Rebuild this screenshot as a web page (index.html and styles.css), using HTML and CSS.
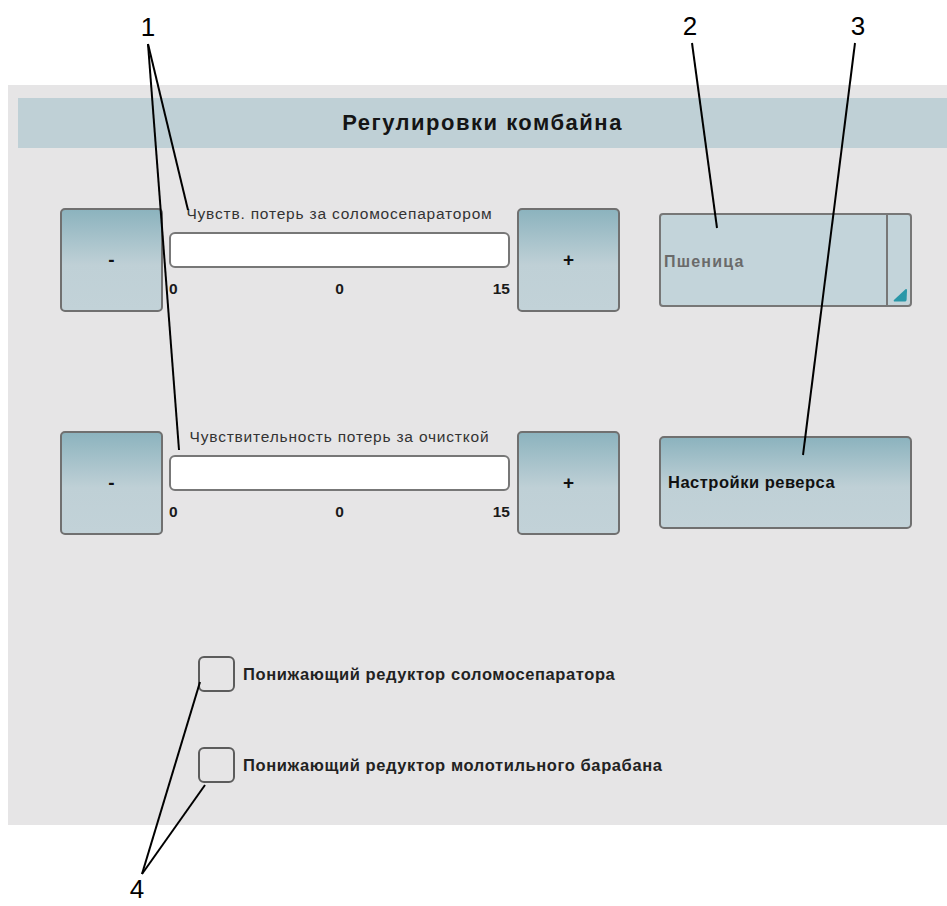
FILE: index.html
```html
<!DOCTYPE html>
<html lang="ru">
<head>
    <meta charset="UTF-8">
    <meta name="viewport" content="width=device-width, initial-scale=1.0">
    <title>Регулировки комбайна</title>
    <link rel="stylesheet" href="styles.css">
</head>
<body>
    <div class="page">
        <div class="panel">
            <div class="title-bar">Регулировки комбайна</div>

            <div class="controls">
                <div class="row">
                    <button class="step-btn">-</button>
                    <div class="slider">
                        <div class="slider-label">Чувств. потерь за соломосепаратором</div>
                        <div class="slider-track"></div>
                        <div class="slider-scale"><span class="min">0</span><span class="value">0</span><span class="max">15</span></div>
                    </div>
                    <button class="step-btn">+</button>
                    <div class="combo">
                        <div class="combo-value">Пшеница</div>
                        <div class="combo-arrow">
                            <svg width="14" height="14" viewBox="0 0 14 14">
                                <path d="M12.5 1.2 C13.4 0.6 14 1.2 14 2.4 L13.6 11.6 C13.5 13 12.8 13.6 11.5 13.6 L2 13.6 C0.6 13.6 0.2 12.7 1.2 11.7 Z" fill="#2a97a8"/>
                            </svg>
                        </div>
                    </div>
                </div>

                <div class="row">
                    <button class="step-btn">-</button>
                    <div class="slider">
                        <div class="slider-label">Чувствительность потерь за очисткой</div>
                        <div class="slider-track"></div>
                        <div class="slider-scale"><span class="min">0</span><span class="value">0</span><span class="max">15</span></div>
                    </div>
                    <button class="step-btn">+</button>
                    <button class="action-btn">Настройки реверса</button>
                </div>
            </div>

            <div class="options">
                <label class="option"><span class="check"></span>Понижающий редуктор соломосепаратора</label>
                <label class="option"><span class="check"></span>Понижающий редуктор молотильного барабана</label>
            </div>
        </div>

        <!-- callout numbers and leader lines -->
        <svg class="callouts" width="947" height="906" viewBox="0 0 947 906">
            <g stroke="#000" stroke-width="2" fill="none">
                <line x1="148" y1="44" x2="188" y2="210"/>
                <line x1="148" y1="44" x2="179" y2="450"/>
                <line x1="692" y1="43" x2="717" y2="228"/>
                <line x1="855" y1="43" x2="803" y2="455"/>
                <line x1="142" y1="874" x2="200" y2="682"/>
                <line x1="142" y1="874" x2="205" y2="785"/>
            </g>
            <g class="callout-num" text-anchor="middle">
                <text x="148" y="36">1</text>
                <text x="690" y="35">2</text>
                <text x="858" y="35">3</text>
                <text x="137" y="898">4</text>
            </g>
        </svg>
    </div>
</body>
</html>
```

FILE: styles.css
```css
body {
    margin: 0;
    background-color: #fff;
    font-family: "Liberation Sans", Arial, sans-serif;
    color: #111;
}

.page {
    position: relative;
    width: 947px;
    height: 906px;
    overflow: hidden;
}

.panel {
    margin: 85px 0 0 8px;
    height: 740px;
    padding: 13px 0 0 10px;
    box-sizing: border-box;
    background-color: #e6e5e6;
}

.title-bar {
    height: 50px;
    background-color: #bfd0d6;
    display: flex;
    align-items: center;
    justify-content: center;
    font-size: 22px;
    font-weight: bold;
    letter-spacing: 1.5px;
    color: #151515;
}

.controls {
    margin-top: 60px;
    padding-left: 42px;
    display: flex;
    flex-direction: column;
    gap: 119px;
}

.row {
    display: flex;
    align-items: flex-start;
    height: 104px;
}

.step-btn,
.action-btn {
    border: 2px solid #707070;
    border-radius: 5px;
    background: linear-gradient(#8cb3be, #bfd0d6 55%, #c2d2d8);
    font-family: "Liberation Sans", Arial, sans-serif;
    font-weight: bold;
    color: #111;
    padding: 0;
    box-sizing: border-box;
}

.step-btn {
    width: 103px;
    height: 104px;
    font-size: 19px;
}

.slider {
    width: 341px;
    margin: 0 7px 0 6px;
}

.slider-label {
    margin-top: -2px;
    font-size: 15.5px;
    letter-spacing: 0.8px;
    line-height: 16px;
    text-align: center;
    white-space: nowrap;
    color: #333;
}

.slider-track {
    height: 36px;
    margin-top: 10px;
    background-color: #fff;
    border: 2px solid #777;
    border-radius: 6px;
    box-sizing: border-box;
}

.slider-scale {
    display: grid;
    grid-template-columns: 1fr auto 1fr;
    margin-top: 12px;
    font-size: 15.5px;
    line-height: 18px;
    font-weight: bold;
    color: #1a1a1a;
}

.slider-scale .max {
    text-align: right;
}

.combo {
    display: flex;
    width: 253px;
    height: 94px;
    margin: 5px 0 0 39px;
    border: 2px solid #777;
    border-radius: 4px;
    background-color: #c3d4da;
    box-sizing: border-box;
}

.combo-value {
    flex: 1;
    display: flex;
    align-items: center;
    padding: 4px 0 0 3px;
    border-right: 2px solid #777;
    font-size: 16px;
    letter-spacing: 1.2px;
    font-weight: bold;
    color: #6a6a6a;
}

.combo-arrow {
    width: 22px;
    display: flex;
    align-items: flex-end;
    justify-content: flex-end;
    padding: 0 3px 3px 0;
    box-sizing: border-box;
}

.action-btn {
    width: 253px;
    height: 93px;
    margin: 5px 0 0 39px;
    padding-left: 7px;
    text-align: left;
    font-size: 16.5px;
    letter-spacing: 0.5px;
}

.options {
    margin-top: 121px;
    padding-left: 180px;
    display: flex;
    flex-direction: column;
    gap: 55px;
}

.option {
    display: flex;
    align-items: center;
    gap: 8px;
    font-size: 16.5px;
    letter-spacing: 0.6px;
    font-weight: bold;
    color: #222;
}

.check {
    width: 37px;
    height: 36px;
    border: 2px solid #5c5c5c;
    border-radius: 6px;
    box-sizing: border-box;
}

.callouts {
    position: absolute;
    top: 0;
    left: 0;
    pointer-events: none;
}

.callout-num {
    font-family: "Liberation Sans", Arial, sans-serif;
    font-size: 26px;
    fill: #000;
}
```
